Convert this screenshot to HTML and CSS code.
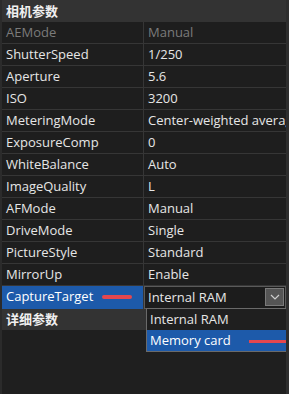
FILE: index.html
```html
<!DOCTYPE html>
<html>
<head>
    <title>相机参数</title>
    <link rel="stylesheet" href="styles.css">
</head>
<body>
    <div class="panel">
        <div class="group-head">相机参数</div>
        <div class="prop-row disabled"><div class="name">AEMode</div><div class="value">Manual</div></div>
        <div class="prop-row"><div class="name">ShutterSpeed</div><div class="value">1/250</div></div>
        <div class="prop-row"><div class="name">Aperture</div><div class="value">5.6</div></div>
        <div class="prop-row"><div class="name">ISO</div><div class="value">3200</div></div>
        <div class="prop-row"><div class="name">MeteringMode</div><div class="value">Center-weighted average</div></div>
        <div class="prop-row"><div class="name">ExposureComp</div><div class="value">0</div></div>
        <div class="prop-row"><div class="name">WhiteBalance</div><div class="value">Auto</div></div>
        <div class="prop-row"><div class="name">ImageQuality</div><div class="value">L</div></div>
        <div class="prop-row"><div class="name">AFMode</div><div class="value">Manual</div></div>
        <div class="prop-row"><div class="name">DriveMode</div><div class="value">Single</div></div>
        <div class="prop-row"><div class="name">PictureStyle</div><div class="value">Standard</div></div>
        <div class="prop-row"><div class="name">MirrorUp</div><div class="value">Enable</div></div>
        <div class="prop-row selected">
            <div class="name">CaptureTarget <span class="mark"></span></div>
            <div class="value combo">
                <span>Internal RAM</span>
                <span class="combo-btn">
                    <svg width="10" height="6" viewBox="0 0 10 6"><path d="M1 1 L5 5 L9 1" fill="none" stroke="#cfcfcf" stroke-width="1.2"/></svg>
                </span>
                <div class="popup">
                    <div class="opt">Internal RAM</div>
                    <div class="opt active">Memory card <span class="mark2"></span></div>
                </div>
            </div>
        </div>
        <div class="group-head">详细参数</div>
    </div>
</body>
</html>
```

FILE: styles.css
```css
html, body {
    margin: 0;
    padding: 0;
    background: #1f1f1f;
}
body {
    font-family: "Open Sans", "Noto Sans CJK SC", sans-serif;
    font-size: 13px;
    color: #e6e6e6;
}
.panel {
    height: 394px;
    border-left: 2px solid #2b2b2b;
    border-right: 3px solid #2e2e2e;
    box-sizing: border-box;
    overflow: hidden;
}
.group-head {
    height: 22px;
    line-height: 22px;
    padding-left: 4px;
    background: #333333;
    font-family: "Noto Sans CJK SC", sans-serif;
    font-weight: bold;
    color: #f0f0f0;
}
.prop-row {
    display: grid;
    grid-template-columns: 142px 1fr;
    height: 22px;
    line-height: 21px;
    border-bottom: 1px solid #363636;
    box-sizing: border-box;
    background: #1e1e1e;
}
.name {
    padding-left: 4px;
    border-right: 1px solid #363636;
    white-space: nowrap;
    overflow: hidden;
}
.value {
    padding-left: 4px;
    white-space: nowrap;
    overflow: hidden;
}
.disabled {
    color: #7b7b7b;
}
.selected .name {
    background: #1d5aaa;
    color: #ffffff;
    position: relative;
}
.mark {
    position: absolute;
    left: 100px;
    top: 9px;
    width: 30px;
    height: 4px;
    border-radius: 2px;
    background: #e4474f;
}
.combo {
    position: relative;
    overflow: visible;
    display: flex;
    align-items: center;
    border: 1px solid #5a5a5a;
    background: #1c1c1c;
    box-sizing: border-box;
    padding-left: 3px;
}
.combo-btn {
    position: absolute;
    right: 1px;
    top: 1px;
    width: 19px;
    height: 18px;
    background: #555555;
    border: 1px solid #7a7a7a;
    box-sizing: border-box;
    display: flex;
    align-items: center;
    justify-content: center;
}
.popup {
    position: absolute;
    left: 1px;
    top: 21px;
    width: 146px;
    background: #1f1f1f;
    border: 1px solid #6a6a6a;
    box-sizing: border-box;
    z-index: 2;
}
.opt {
    height: 21px;
    line-height: 21px;
    padding-left: 3px;
    position: relative;
}
.opt.active {
    background: #1d5aaa;
    color: #ffffff;
}
.mark2 {
    position: absolute;
    left: 102px;
    top: 10px;
    width: 50px;
    height: 3px;
    background: #e4474f;
}
```
